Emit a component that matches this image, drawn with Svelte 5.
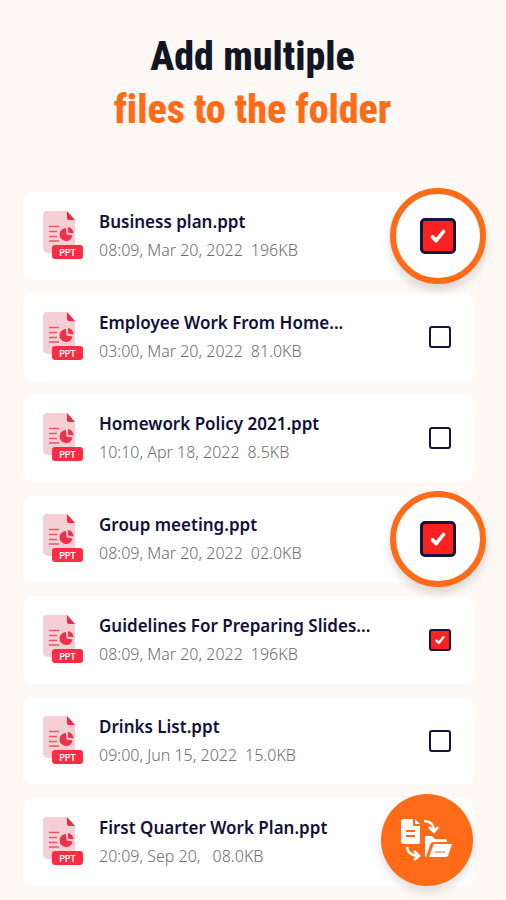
<script>
  let files = $state([
    { name: 'Business plan.ppt', date: '08:09, Mar 20, 2022', size: '196KB', selected: true, highlighted: true },
    { name: 'Employee Work From Home...', date: '03:00, Mar 20, 2022', size: '81.0KB', selected: false },
    { name: 'Homework Policy 2021.ppt', date: '10:10, Apr 18, 2022', size: '8.5KB', selected: false },
    { name: 'Group meeting.ppt', date: '08:09, Mar 20, 2022', size: '02.0KB', selected: true, highlighted: true },
    { name: 'Guidelines For Preparing Slides...', date: '08:09, Mar 20, 2022', size: '196KB', selected: true },
    { name: 'Drinks List.ppt', date: '09:00, Jun 15, 2022', size: '15.0KB', selected: false },
    { name: 'First Quarter Work Plan.ppt', date: '20:09, Sep 20, ', size: '08.0KB', selected: false, action: true }
  ]);
</script>

<main>
  <h1>
    Add multiple
    <span>files to the folder</span>
  </h1>

  <ul class="files">
    {#each files as file, i}
      <li class="file">
        <svg class="icon" viewBox="0 0 40 50" aria-hidden="true">
          <path d="M4 0H24L32 9V42H6Q0 42 0 37V4Q0 0 4 0Z" fill="#f6cfd4" />
          <path d="M24 0L32 9H26Q24 9 24 7Z" fill="#ee2940" />
          <path d="M6 15.500H16M6 20.500H14M6 25.500H14M6 30H16" stroke="#ea5568" stroke-width="1.300" />
          <path d="M23 17A6.500 6.500 0 1 0 29.500 24.500L23.500 23.500Z" fill="#ee3048" />
          <path d="M25 16A6.500 6.500 0 0 1 30.500 22.500L25 21.500Z" fill="#ee3048" />
          <rect x="9" y="34" width="31" height="14" rx="3" fill="#fb2c43" />
          <text x="24.500" y="44.500" text-anchor="middle">PPT</text>
        </svg>

        {#if file.action}
          <div class="details">
            <span class="name">{file.name}</span>
            <span class="meta"><span>{file.date}</span><span>{file.size}</span></span>
          </div>
          <button class="move" aria-label="Move to folder">
            <svg viewBox="0 0 52 42" aria-hidden="true">
              <path d="M2 0H12V7H19V23Q19 25 17 25H2Q0 25 0 23V2Q0 0 2 0Z" fill="#fff" />
              <path d="M14 0L19 5H14Z" fill="#fff" />
              <path d="M5 12H14M5 17H14" stroke="#ff6b17" stroke-width="1.800" />
              <path d="M23 2Q32 2 33 11M28 8L33 13L37 8M6 28Q7 36 16 37M13 32L18 37L13 41" fill="none" stroke="#fff" stroke-width="2.500" />
              <path d="M24 17H31L34 20H44Q46 20 46 23H32Q30 23 29 26L25 38Q24 38 24 37Z" fill="#fff" />
              <path d="M34 25H51L47 37Q46 38 44 38H28L32 27Q32 25 34 25Z" fill="#fff" />
              <path d="M34 33H44" stroke="#ff9c65" stroke-width="1.500" />
            </svg>
          </button>
        {:else}
          <label class="details" for="file-{i}">
            <span class="name">{file.name}</span>
            <span class="meta"><span>{file.date}</span><span>{file.size}</span></span>
          </label>
          <span class="check" class:highlighted={file.highlighted}>
            <input id="file-{i}" type="checkbox" bind:checked={file.selected} />
            {#if file.selected}
              <svg viewBox="0 0 24 24" aria-hidden="true">
                <path d="M6 13L10 17L18 7" />
              </svg>
            {/if}
          </span>
        {/if}
      </li>
    {/each}
  </ul>
</main>

<style>
  :global(body) {
    margin: 0;
    background: #fff9f6;
  }

  main {
    padding: 30px 32px 15px 23px;
    font-family: "Noto Sans", sans-serif;
  }

  h1 {
    margin: 0 0 56px;
    padding-left: 8px;
    color: #111624;
    font-family: "Roboto Condensed", "Liberation Sans Narrow", sans-serif;
    font-size: 40px;
    font-variant-ligatures: none;
    font-weight: 800;
    line-height: 53px;
    text-align: center;
  }

  h1 span {
    display: block;
    color: #ff6b17;
  }

  .files {
    display: flex;
    flex-direction: column;
    gap: 13px;
    margin: 0;
    padding: 0;
    list-style: none;
  }

  .file {
    position: relative;
    display: flex;
    align-items: center;
    box-sizing: border-box;
    min-height: 88px;
    padding: 0 23px 0 20px;
    border-radius: 10px;
    background: #fff;
  }

  .icon {
    flex: none;
    width: 40px;
    height: 50px;
    margin-right: 16px;
  }

  .icon text {
    fill: #fff;
    font-family: Lato, sans-serif;
    font-size: 9px;
    font-weight: 700;
  }

  .details {
    flex: 1;
    min-width: 0;
    white-space: nowrap;
  }

  .name {
    display: block;
    color: #12103a;
    font-size: 17px;
    font-weight: 600;
    line-height: 28px;
  }

  .meta {
    display: flex;
    gap: 8px;
    color: #6c6c6c;
    font-size: 16px;
    font-weight: 300;
    line-height: 28px;
    white-space: pre;
  }

  .check {
    display: grid;
    flex: none;
    place-items: center;
    width: 22px;
    height: 22px;
  }

  .check input,
  .check svg {
    grid-area: 1 / 1;
    width: 22px;
    height: 22px;
  }

  .check input {
    appearance: none;
    box-sizing: border-box;
    margin: 0;
    border: 2px solid #17143a;
    border-radius: 3px;
    background: #fff;
  }

  .check input:checked {
    background: #ff2020;
  }

  .check svg {
    width: 14px;
    height: 14px;
    pointer-events: none;
  }

  .check path {
    fill: none;
    stroke: #fff;
    stroke-linecap: round;
    stroke-linejoin: round;
    stroke-width: 4;
  }

  .check.highlighted {
    position: absolute;
    top: -4px;
    right: -12px;
    z-index: 1;
    box-sizing: border-box;
    width: 96px;
    height: 96px;
    border: 6px solid #ff6b17;
    border-radius: 50%;
    background: #fff;
    box-shadow: 0 6px 10px rgba(0, 0, 0, 0.15);
  }

  .check.highlighted input {
    width: 36px;
    height: 36px;
    border-width: 3px;
    border-radius: 5px;
  }

  .check.highlighted svg {
    width: 22px;
    height: 22px;
  }

  .move {
    position: absolute;
    top: -4px;
    right: 1px;
    display: grid;
    place-items: center;
    width: 92px;
    height: 92px;
    padding: 0;
    border: 0;
    border-radius: 50%;
    background: #ff6b17;
    box-shadow: 0 6px 10px rgba(0, 0, 0, 0.12);
  }

  .move svg {
    width: 52px;
    height: 42px;
  }
</style>
